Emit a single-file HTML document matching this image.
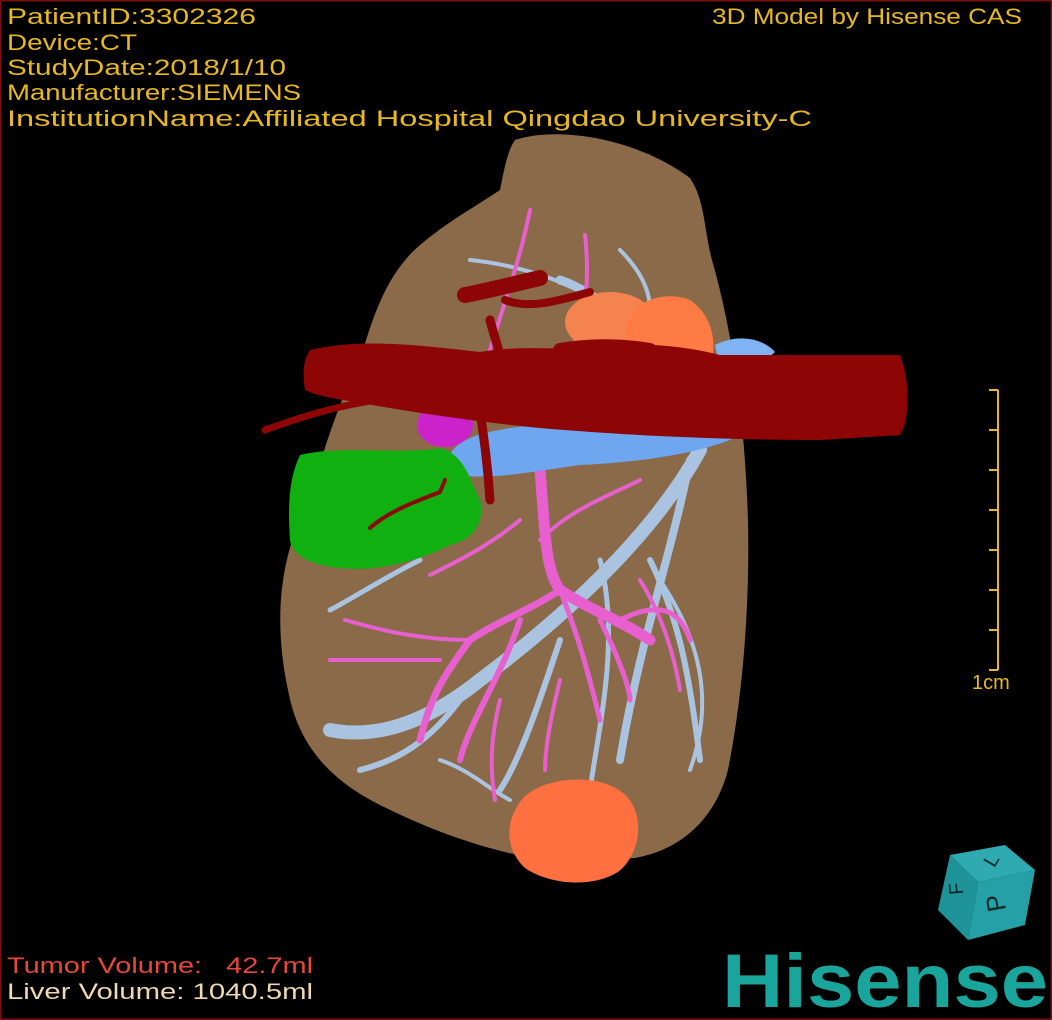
<!DOCTYPE html>
<html><head><meta charset="utf-8"><style>
html,body{margin:0;padding:0;background:#000;}
svg{display:block}
text{font-family:"Liberation Sans","DejaVu Sans",sans-serif;white-space:pre;}
</style></head><body>
<svg width="1052" height="1020" viewBox="0 0 1052 1020" xmlns="http://www.w3.org/2000/svg">
<rect width="1052" height="1020" fill="#000"/>
<rect x="0.5" y="0.5" width="1051" height="1019" fill="none" stroke="#7a1010" stroke-width="2"/>

<path d="M515,140 C560,125 640,140 690,178 C705,200 704,230 712,260 C735,340 745,430 748,520 C750,610 742,700 728,770 C715,820 680,850 635,858 L560,862 C500,855 440,835 380,805 C330,780 298,745 288,690 C275,630 278,570 300,520 C320,470 330,420 360,360 C372,320 385,275 420,245 C450,220 470,210 500,190 C505,165 508,150 515,140 Z" fill="#8a6a48"/>

<g stroke="#a9c3e0" fill="none" stroke-linecap="round">
<path d="M700,450 C650,540 560,620 480,680 C430,720 380,740 330,730" stroke-width="14"/>
<path d="M690,460 C670,560 640,640 620,760" stroke-width="8"/>
<path d="M650,560 C680,620 690,680 700,760" stroke-width="6"/>
<path d="M560,640 C540,700 520,760 500,790" stroke-width="6"/>
<path d="M460,700 C430,740 400,760 360,770" stroke-width="6"/>
<path d="M420,560 C380,580 350,600 330,610" stroke-width="5"/>
<path d="M560,280 C590,290 610,310 640,330" stroke-width="9"/>
<path d="M470,260 C520,265 560,280 600,300" stroke-width="4"/>
<path d="M620,250 C640,270 650,290 650,310" stroke-width="4"/>
<path d="M600,560 C620,640 600,720 590,790" stroke-width="5"/>
<path d="M660,580 C700,640 715,700 690,770" stroke-width="4"/>
<path d="M440,760 C470,770 490,790 510,800" stroke-width="4"/>
</g>

<g stroke="#e860cf" fill="none" stroke-linecap="round">
<path d="M540,470 C545,530 545,570 560,590 C590,610 620,620 650,640" stroke-width="11"/>
<path d="M560,590 C530,610 500,620 470,640 C440,680 430,700 420,740" stroke-width="7"/>
<path d="M520,620 C500,680 470,720 460,760" stroke-width="6"/>
<path d="M560,590 C580,640 590,680 600,720" stroke-width="5"/>
<path d="M600,620 C620,660 630,690 630,700" stroke-width="5"/>
<path d="M620,620 C660,600 680,610 690,640" stroke-width="5"/>
<path d="M470,640 C420,640 380,630 345,620" stroke-width="4"/>
<path d="M440,660 C400,660 370,660 330,660" stroke-width="4"/>
<path d="M540,540 C570,510 600,500 640,480" stroke-width="4"/>
<path d="M520,520 C490,545 460,560 430,575" stroke-width="4"/>
<path d="M500,700 C490,740 490,770 495,800" stroke-width="4"/>
<path d="M560,680 C550,720 545,750 545,770" stroke-width="4"/>
<path d="M530,210 C520,260 505,300 490,350" stroke-width="4"/>
<path d="M585,235 C590,280 585,320 575,340" stroke-width="4"/>
<path d="M640,580 C665,620 675,660 680,690" stroke-width="4"/>
</g>

<ellipse cx="610" cy="322" rx="45" ry="30" fill="#f58350"/>
<path d="M625,330 C630,300 665,290 690,300 C712,315 716,340 712,360 L630,360 Z" fill="#ff7b45"/>

<path d="M450,455 C460,430 520,425 600,420 L720,410 C740,405 760,420 730,440 C690,455 640,462 580,465 C530,472 490,480 460,475 Z" fill="#6ea7ef"/>
<path d="M715,345 C740,332 765,340 775,352 L760,365 L718,360 Z" fill="#7fb3f2"/>

<ellipse cx="445" cy="425" rx="28" ry="22" fill="#cc22cc"/>

<path d="M300,455 C340,445 400,455 440,448 C465,455 470,480 480,500 C485,520 475,540 450,545 C420,560 380,572 340,568 C310,565 292,555 290,540 C288,510 288,480 300,455 Z" fill="#0fb00f"/>
<path d="M370,528 C390,510 420,500 440,492 L445,480" stroke="#8a0a0a" stroke-width="4" fill="none" stroke-linecap="round"/>

<g fill="none" stroke="#8d0505" stroke-linecap="round">
<path d="M265,430 C320,410 360,400 420,395" stroke-width="7"/>
<path d="M478,400 C485,440 488,470 490,500" stroke-width="9"/>
<path d="M490,320 C495,340 500,350 502,370" stroke-width="9"/>
<path d="M465,295 C490,290 510,285 540,278" stroke-width="16"/>
<path d="M505,300 C530,310 560,300 590,292" stroke-width="8"/>
<path d="M560,350 C590,345 620,345 650,350" stroke-width="14"/>
</g>
<path d="M310,350 C360,338 420,345 480,352 C520,345 560,350 600,348 C640,342 680,345 720,355 L900,355 C910,380 910,420 900,435 L820,440 C720,440 620,435 540,428 C460,420 400,410 355,402 C330,398 315,395 305,390 C302,370 304,360 310,350 Z" fill="#8d0505"/>

<path d="M518,805 C535,775 605,770 628,798 C645,818 640,855 618,872 C592,888 550,885 525,868 C506,850 505,825 518,805 Z" fill="#ff7040"/>

<g stroke="#e8b820" stroke-width="2">
<line x1="998" y1="390" x2="998" y2="670"/>
<line x1="989" y1="390" x2="998" y2="390"/><line x1="989" y1="430" x2="998" y2="430"/>
<line x1="989" y1="470" x2="998" y2="470"/><line x1="989" y1="510" x2="998" y2="510"/>
<line x1="989" y1="550" x2="998" y2="550"/><line x1="989" y1="590" x2="998" y2="590"/>
<line x1="989" y1="630" x2="998" y2="630"/><line x1="989" y1="670" x2="998" y2="670"/>
</g>
<text x="972" y="689" font-size="20" fill="#e8b820">1cm</text>

<g font-size="22" fill="#e8b820">
<text x="7" y="24" textLength="249" lengthAdjust="spacingAndGlyphs">PatientID:3302326</text>
<text x="7" y="50" textLength="130" lengthAdjust="spacingAndGlyphs">Device:CT</text>
<text x="7" y="75" textLength="279" lengthAdjust="spacingAndGlyphs">StudyDate:2018/1/10</text>
<text x="7" y="100" textLength="294" lengthAdjust="spacingAndGlyphs">Manufacturer:SIEMENS</text>
<text x="7" y="126" textLength="805" lengthAdjust="spacingAndGlyphs">InstitutionName:Affiliated Hospital Qingdao University-C</text>
<text x="712" y="24" textLength="310" lengthAdjust="spacingAndGlyphs">3D Model by Hisense CAS</text>
</g>
<text x="7" y="973" font-size="22" fill="#e8483a" xml:space="preserve" textLength="306" lengthAdjust="spacingAndGlyphs">Tumor Volume:   42.7ml</text>
<text x="7" y="999" font-size="22" fill="#f0d8b0" textLength="306" lengthAdjust="spacingAndGlyphs">Liver Volume: 1040.5ml</text>

<polygon points="950,855 1005,845 1035,870 978,882" fill="#2eaab0"/>
<polygon points="950,855 978,882 968,940 938,910" fill="#1e9499"/>
<polygon points="978,882 1035,870 1025,925 968,940" fill="#25a0a6"/>
<text x="988" y="915" font-size="26" fill="#0a2a2a" transform="rotate(-100 995 905)">P</text>
<text x="985" y="868" font-size="20" fill="#0a2a2a" transform="rotate(-60 990 860)">L</text>
<text x="950" y="898" font-size="20" fill="#0a2a2a" transform="rotate(-95 955 890)">F</text>

<text x="722" y="1007" font-size="76" font-weight="bold" fill="#19a59c" textLength="326" lengthAdjust="spacingAndGlyphs">Hisense</text>
</svg>
</body></html>
